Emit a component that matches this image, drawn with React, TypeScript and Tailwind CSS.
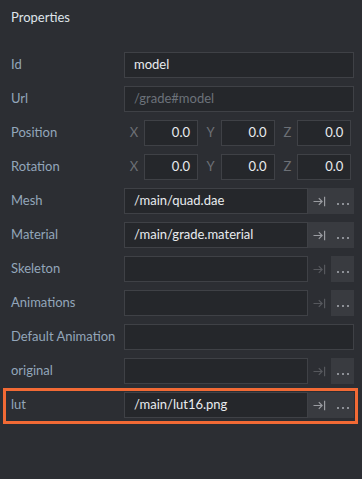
import type { ReactNode } from 'react';

const font = { fontFamily: 'Lato, "Open Sans", sans-serif' };

function Label({ children }: { children: ReactNode }) {
  return <div className="w-[113px] shrink-0 text-[13px] text-[#93a6ba]">{children}</div>;
}

function GotoIcon({ active }: { active: boolean }) {
  return (
    <svg width="13" height="11" viewBox="0 0 13 11" fill="none" stroke={active ? '#9a9ca1' : '#56585d'} strokeWidth="1.2">
      <path d="M0.5 5.5H9M5.8 2.2L9.1 5.5L5.8 8.8M11.6 0.8V10.2" />
    </svg>
  );
}

function Dots() {
  return (
    <div className="flex gap-[3px] pt-[5px]">
      <span className="h-[2px] w-[2px] bg-[#8d9096]" />
      <span className="h-[2px] w-[2px] bg-[#8d9096]" />
      <span className="h-[2px] w-[2px] bg-[#8d9096]" />
    </div>
  );
}

function TextField({ value, placeholder }: { value?: string; placeholder?: string }) {
  return (
    <div className="flex h-[26px] flex-1 items-center border border-[#3f4146] bg-[#25272b] px-[9px] text-[13px]">
      {value ? (
        <span className="text-[#e9ecef]">{value}</span>
      ) : (
        <span className="text-[#6c727a]">{placeholder}</span>
      )}
    </div>
  );
}

function ResourceField({ value }: { value?: string }) {
  const active = !!value;
  return (
    <div className="flex h-[26px] flex-1">
      <div className="flex flex-1 items-center border border-[#3f4146] bg-[#25272b] px-[9px] text-[13px] text-[#e9ecef]">
        {value}
      </div>
      <div className={`flex w-[23px] items-center justify-center ${active ? 'bg-[#393b40]' : 'bg-[#2c2e33]'}`}>
        <GotoIcon active={active} />
      </div>
      <div className="flex w-[23px] items-center justify-center bg-[#393b40]">
        <Dots />
      </div>
    </div>
  );
}

function VectorField() {
  return (
    <div className="grid flex-1 grid-cols-3">
      {['X', 'Y', 'Z'].map(axis => (
        <div key={axis} className="flex h-[26px]">
          <div className="flex w-[20px] items-center justify-center text-[13px] text-[#6c7076]">{axis}</div>
          <div className="flex w-[54px] items-center justify-end border border-[#3f4146] bg-[#25272b] px-[7px] text-[13px] text-[#e9ecef]">
            0.0
          </div>
        </div>
      ))}
    </div>
  );
}

function Row({ label, children }: { label: string; children: ReactNode }) {
  return (
    <div className="flex items-center">
      <Label>{label}</Label>
      {children}
    </div>
  );
}

export default function App() {
  return (
    <div className="h-[479px] w-[362px] bg-[#2c2e33] pl-[11px] pr-[8px] pt-[7px]" style={font}>
      <div className="h-[20px] text-[13px] leading-[20px] text-[#dfe4ea]">Properties</div>
      <div className="mt-[25px] flex flex-col gap-[8px]">
        <Row label="Id">
          <TextField value="model" />
        </Row>
        <Row label="Url">
          <TextField placeholder="/grade#model" />
        </Row>
        <Row label="Position">
          <VectorField />
        </Row>
        <Row label="Rotation">
          <VectorField />
        </Row>
        <Row label="Mesh">
          <ResourceField value="/main/quad.dae" />
        </Row>
        <Row label="Material">
          <ResourceField value="/main/grade.material" />
        </Row>
        <Row label="Skeleton">
          <ResourceField />
        </Row>
        <Row label="Animations">
          <ResourceField />
        </Row>
        <Row label="Default Animation">
          <TextField />
        </Row>
        <Row label="original">
          <ResourceField />
        </Row>
        <div className="relative">
          <Row label="lut">
            <ResourceField value="/main/lut16.png" />
          </Row>
          <div className="pointer-events-none absolute left-[-8px] right-[-4px] top-[-4px] bottom-[-6px] border-[3px] border-[#f26a35]" />
        </div>
      </div>
    </div>
  );
}
